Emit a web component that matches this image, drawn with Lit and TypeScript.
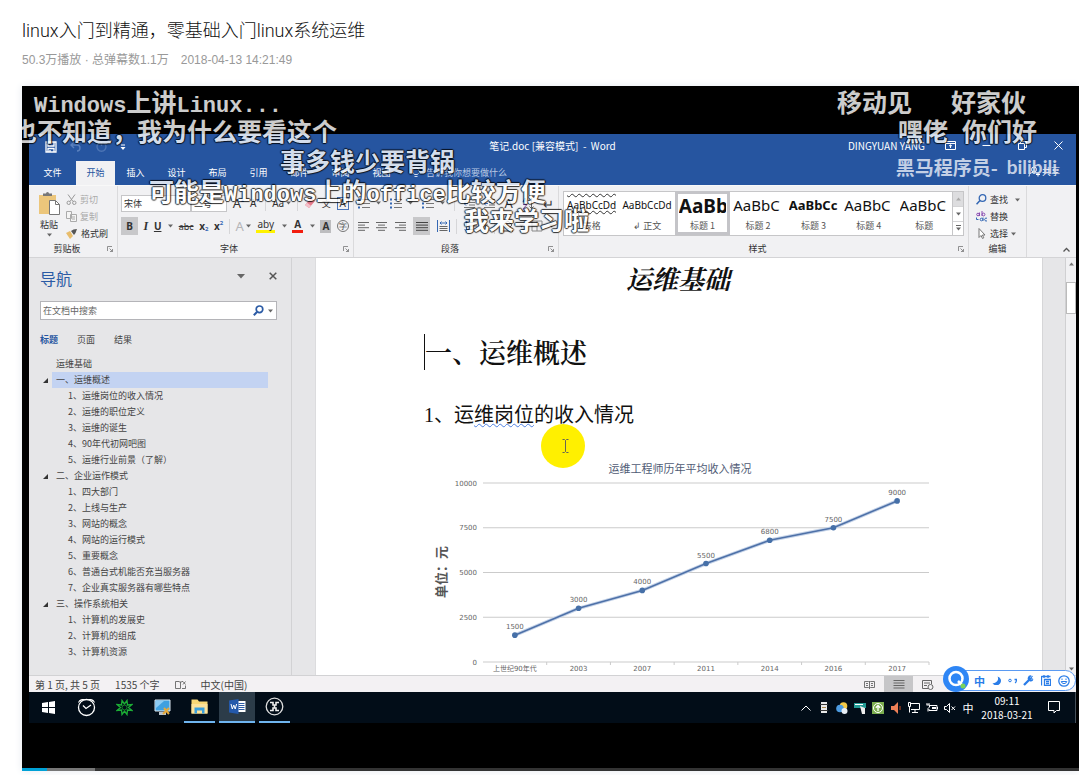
import { LitElement, html, svg, css, nothing } from "lit";
import { customElement } from "lit/decorators.js";
import { classMap } from "lit/directives/class-map.js";

/* ---------- shared icon helper ---------- */
const icon = (w: number, h: number, body: unknown) =>
  html`<svg class="ic" width=${w} height=${h} viewBox="0 0 ${w} ${h}" fill="none" aria-hidden="true">${body}</svg>`;

const caret = icon(5, 4, svg`<path d="M0 0.5h5L2.5 3.5z" fill="#666"/>`);
const launcher = icon(6, 6, svg`<path d="M0.5 5V0.5H5M2.5 2.5l3 3M5.5 3v2.5H3" stroke="#777" stroke-width="0.8"/>`);
const lines = (ws: [number, number][], color = "#666") =>
  svg`${ws.map(([x, w], i) => svg`<path d="M${x} ${1.5 + i * 2.6}h${w}" stroke=${color} stroke-width="1"/>`)}`;

const reset = css`
  * { box-sizing: border-box; margin: 0; padding: 0; }
  button, input, select { font: inherit; color: inherit; background: none; border: 0; border-radius: 0; outline: 0; }
  button { display: inline-flex; align-items: center; justify-content: center; gap: 2px; white-space: nowrap; }
  .ic { display: block; flex: none; }
`;

/* ---------- title bar and tabs ---------- */
@customElement("word-titlebar")
class WordTitlebar extends LitElement {
  static styles = [reset, css`
    :host { display: block; background: #2655a0; color: #fff; }
    .top { display: grid; grid-template-columns: 1fr auto 1fr; align-items: center; height: 27px; padding-bottom: 5px; font-size: 10px; }
    .quick { display: flex; gap: 13px; padding-left: 16px; align-items: center; padding-top: 4px; }
    .right { display: flex; justify-content: flex-end; align-items: center; }
    .right .user { margin-right: 7px; }
    .right .win { width: 36px; height: 20px; }
    .tabs { display: flex; height: 24px; align-items: stretch; font-size: 9px; }
    .tabs button { width: 41px; padding-bottom: 2px; }
    .tabs .file { width: 47px; }
    .tabs .on { width: 39px; background: #f1f1f3; color: #2655a0; }
    .tell { display: flex; align-items: center; gap: 6px; padding: 0 0 2px 10px; color: #b9c9e4; }
    .tabs .share { width: auto; margin-left: auto; margin-right: 16px; padding-bottom: 4px; }
  `];
  render() {
    const tabs = ["文件", "开始", "插入", "设计", "布局", "引用", "邮件", "审阅", "视图"];
    return html`
      <div class="top">
        <div class="quick">
          <button aria-label="保存">${icon(12, 12, svg`<path d="M1 1h10v10H1zM3 1v4h6V1M3 11V7.5h6V11M5 9v2" stroke="#fff" stroke-width="1.3"/>`)}</button>
          <button aria-label="撤消">${icon(12, 12, svg`<path d="M4 1L1 4l3 3M1 4h6a3 3 0 0 1 0 6" stroke="#5a80bd" stroke-width="1.4"/>`)}</button>
          <button aria-label="重复">${icon(12, 12, svg`<path d="M9 2a4.5 4.5 0 1 1-5 0M6.500 1v4" stroke="#4c74b4" stroke-width="1.4"/>`)}</button>
          <button aria-label="自定义">${icon(6, 7, svg`<path d="M1 1h4" stroke="#fff"/><path d="M0.500 3h5L3 6z" fill="#fff"/>`)}</button>
        </div>
        <div>笔记.doc [兼容模式] &nbsp;-&nbsp; Word</div>
        <div class="right">
          <span class="user">DINGYUAN YANG</span>
          <button class="win" aria-label="功能区">${icon(11, 9, svg`<path d="M0.500 0.500h10v8h-10zM0.500 2.500h10M5.500 7V4M4 5.200L5.500 3.800 7 5.200" stroke="#fff"/>`)}</button>
          <button class="win" aria-label="最小化">${icon(9, 9, svg`<path d="M0.500 4.500h8" stroke="#fff"/>`)}</button>
          <button class="win" aria-label="还原">${icon(9, 9, svg`<path d="M0.500 2.500h6v6h-6zM2.500 2V0.500h6v6H7" stroke="#fff"/>`)}</button>
          <button class="win" aria-label="关闭">${icon(9, 9, svg`<path d="M0.500 0.500l8 8M8.500 0.500l-8 8" stroke="#fff"/>`)}</button>
        </div>
      </div>
      <div class="tabs">
        ${tabs.map((t, i) => html`<button class=${classMap({ file: i === 0, on: i === 1 })}>${t}</button>`)}
        <span class="tell">${icon(8, 11, svg`<path d="M2.500 7.500C1 6 0.800 4.800 0.800 4a3.200 3.200 0 0 1 6.400 0c0 .8-.2 2-1.700 3.500zM2.500 9.500h3" stroke="#d5def0"/>`)}告诉我你想要做什么</span>
        <button class="share">${icon(12, 11, svg`<circle cx="6" cy="3.500" r="2.500" stroke="#fff"/><path d="M1 10.500c0-3 2-4 4-4M8 8.500h4M10 6.500v4" stroke="#fff"/>`)}共享</button>
      </div>`;
  }
}

/* ---------- ribbon ---------- */
@customElement("word-ribbon")
class WordRibbon extends LitElement {
  static styles = [reset, css`
    :host { display: flex; height: 73px; background: #f1f1f3; color: #333; font-size: 9px; border-top: 1px solid #f8f8f8; border-bottom: 1px solid #d4d4d6; box-sizing: border-box; }
    .group { display: flex; flex-direction: column; justify-content: space-between; padding: 5px 4px 1px; border-right: 1px solid #dadadc; }
    .foot { display: flex; align-items: center; line-height: 14px; }
    .foot .name { flex: 1; text-align: center; padding-right: 6px; }
    .edit .foot .name { padding-right: 0; }
    .clip { width: 89px; }
    .font { width: 236px; padding-left: 3px; }
    .para { width: 205px; }
    .styles { flex: 1; max-width: 410px; }
    .edit { width: 58px; border-right: 1px solid #dadadc; }
    .row { display: flex; align-items: center; justify-content: space-between; height: 18px; }
    .rows { display: flex; flex-direction: column; gap: 5px; padding-top: 3px; }
    .rows button { height: 18px; }
    .clipbody { display: flex; gap: 6px; padding-left: 5px; }
    .paste { flex-direction: column; align-items: center; gap: 2px; height: 45px; }
    .stack { display: flex; flex-direction: column; align-items: flex-start; }
    .stack button { height: 17px; gap: 3px; justify-content: flex-start; }
    .off { color: #aaa; }
    .pick { display: flex; }
    .pick select { appearance: none; height: 17px; border: 1px solid #c6c6c8; background: #fff; padding: 0 2px; font-size: 9px; }
    .face { width: 70px; }
    .size { width: 36px; }
    .row .on { background: #c8c8ca; width: 17px; }
    .latin { font-family: "Noto Sans", sans-serif; font-size: 10px; }
    .bold { font-weight: 700; }
    .tight { gap: 0; }
    .ital { font-style: italic; font-family: "Liberation Serif", serif; font-size: 12px; font-weight: 700; }
    .under { text-decoration: underline; font-weight: 700; }
    .strike { text-decoration: line-through; font-size: 9px; }
    .big { font-size: 13px; }
    .red { border-bottom: 3px solid #f21d0e; line-height: 11px; padding: 0 2px; }
    .yel { border-bottom: 3px solid #fff200; line-height: 11px; padding: 0 1px; }
    .ghost { color: #b5b5b8; }
    .fill { background: #bdbdbf; padding: 0 2px; line-height: 13px; font-weight: 700; }
    .ring { border: 1px solid #777; border-radius: 50%; width: 12px; height: 12px; line-height: 10px; font-size: 8px; text-align: center; }
    .boxed { border: 1px solid #4a74b8; line-height: 11px; padding: 0 2px; }
    .sep { width: 1px; height: 15px; background: #d6d6d8; }
    sub, sup { font-size: 6px; line-height: 6px; color: #3568b4; }
    sub { align-self: flex-end; padding-bottom: 3px; }
    sup { align-self: flex-start; padding-top: 3px; }
    .gallery { display: flex; height: 45px; background: #fff; border: 1px solid #c6c6c8; }
    .cells { display: grid; grid-template-columns: repeat(7, 1fr); flex: 1; }
    .cell { display: flex; flex-direction: column; justify-content: flex-start; gap: 1px; min-width: 0; overflow: hidden; padding: 0 3px; color: #555; }
    .cell.sel { border: 3px solid #c4c4c8; padding: 0 1px; margin-top: -1px; }
    .sample { width: 100%; height: 27px; line-height: 27px; overflow: hidden; color: #111; font-family: "Noto Sans", "Open Sans", sans-serif; text-align: left; }
    .sel .sample { height: 25px; line-height: 25px; }
    .s10 { font-size: 10px; } .s13 { font-size: 13px; } .s15 { font-size: 15px; } .s19 { font-size: 19px; }
    .wavy { text-decoration: underline overline wavy #333 1px; }
    .cell .cap { line-height: 12px; }
    .scroll { width: 11px; display: grid; grid-template-rows: 1fr 1fr 1fr; border-left: 1px solid #c6c6c8; }
    .scroll button + button { border-top: 1px solid #d4d4d6; }
    .scroll .dim { background: #dddddf; }
    .editbody { padding-left: 3px; }
    .collapse { margin-left: auto; align-self: flex-end; padding: 0 6px 5px 0; }
  `];
  private foot(label: string, open = true) {
    return html`<div class="foot"><span class="name">${label}</span>${open ? launcher : nothing}</div>`;
  }
  render() {
    const cells: [string, string, string][] = [
      ["AaBbCcDd", "s10 wavy", "表格"], ["AaBbCcDd", "s10", "↲ 正文"], ["AaBb", "s19 bold", "标题 1"],
      ["AaBbC", "s15", "标题 2"], ["AaBbCc", "s13 bold", "标题 3"], ["AaBbC", "s15", "标题 4"], ["AaBbC", "s15", "标题"],
    ];
    return html`
      <section class="group clip">
        <div class="clipbody">
          <button class="paste">${icon(22, 25, svg`<path d="M1 4h17v19H1z" fill="#ecc67b"/><path d="M5 5V2.500h3a1.500 1.500 0 0 1 3 0h3V5z" fill="#777"/><path d="M11.500 9.500h6l4 4v10h-10z" fill="#fff" stroke="#777"/><path d="M17.500 9.500v4h4" stroke="#777"/>`)}粘贴 ${caret}</button>
          <div class="stack">
            <button class="off">${icon(11, 11, svg`<path d="M2 0.500l5 7M9 0.500l-5 7" stroke="#999"/><circle cx="2.700" cy="8.800" r="1.700" stroke="#999"/><circle cx="8.300" cy="8.800" r="1.700" stroke="#999"/>`)}剪切</button>
            <button class="off">${icon(11, 11, svg`<path d="M0.500 0.500h5v7h-5zM4.500 3.500h6v7h-6zM6 6h3M6 8h3" stroke="#aaa" fill="#f4f4f4"/>`)}复制</button>
            <button>${icon(12, 11, svg`<path d="M0 5l4-2 3 5-3 3z" fill="#e8bd6c"/><path d="M5 3l3 4 1.500-2L11 1 7.500 1.500z" fill="#555"/>`)}格式刷</button>
          </div>
        </div>
        ${this.foot("剪贴板")}
      </section>
      <section class="group font">
        <div class="rows">
          <div class="row">
            <span class="pick">
              <select class="face" aria-label="字体"><option>宋体</option></select>
              <select class="size" aria-label="字号"><option>二号</option></select>
            </span>
            <button class="latin big tight">A<sup>▴</sup></button><button class="latin tight">A<sup>▾</sup></button><span class="sep"></span>
            <button class="latin">Aa ${caret}</button><span class="sep"></span>
            <button aria-label="清除格式">${icon(12, 12, svg`<path d="M1 8l6-7 4 3-6 7z" fill="#e77b8c"/><path d="M1 8l2-2.300 4 3L5 11z" fill="#f4c1ca"/>`)}</button>
            <button>文</button><button class="latin"><span class="boxed">A</span></button>
          </div>
          <div class="row latin">
            <button class="on bold">B</button><button class="ital">I</button><button><span class="under">U</span>&nbsp;${caret}</button>
            <button class="strike">abc</button><button class="bold tight">x<sub>2</sub></button><button class="bold tight">x<sup>2</sup></button><span class="sep"></span>
            <button class="ghost big">A ${caret}</button><button><span class="yel">aby</span>&nbsp;${caret}</button>
            <button><span class="red bold">A</span>&nbsp;${caret}</button><button><span class="fill">A</span></button><button><span class="ring">字</span></button>
          </div>
        </div>
        ${this.foot("字体")}
      </section>
      <section class="group para">
        <div class="rows">
          <div class="row">
            ${[0, 1, 2].map(() => html`<button aria-label="列表">${icon(12, 11, svg`<path d="M0 1.500h2M0 5.500h2M0 9.500h2" stroke="#3568b4" stroke-width="2"/><path d="M4 1.500h8M4 5.500h8M4 9.500h8" stroke="#777"/>`)}&nbsp;${caret}</button>`)}
            <span class="sep"></span>
            ${[0, 1].map(() => html`<button aria-label="缩进">${icon(11, 11, svg`<path d="M0 1.500h11M5 4.500h6M5 7h6M0 9.500h11" stroke="#777"/><path d="M4 5.500H0M2 3.500L0 5.500l2 2" stroke="#3568b4"/>`)}</button>`)}
            <button class="latin big">A</button>
            <button aria-label="排序">${icon(12, 13, svg`<path d="M1 5L3 1l2 4M1.500 4h3" stroke="#3568b4"/><path d="M1 7.500h4L1 12h4" stroke="#8a4bb0"/><path d="M9.500 1v11M7.500 9.500l2 2 2-2" stroke="#666"/>`)}</button>
            <button class="big">↵</button>
          </div>
          <div class="row">
            <button aria-label="左对齐">${icon(12, 11, lines([[0, 11], [0, 7], [0, 11], [0, 7]]))}</button>
            <button aria-label="居中">${icon(12, 11, lines([[0, 11], [2, 7], [0, 11], [2, 7]]))}</button>
            <button aria-label="右对齐">${icon(12, 11, lines([[0, 11], [4, 7], [0, 11], [4, 7]]))}</button>
            <button class="on" aria-label="两端对齐">${icon(12, 11, lines([[0, 12], [0, 12], [0, 12], [0, 12]], "#444"))}</button>
            <button aria-label="分散对齐">${icon(13, 12, svg`<path d="M0.500 0v12M12.500 0v12M3 3h7M4.500 1.500L3 3l1.500 1.500M8.500 1.500L10 3 8.500 4.500" stroke="#3568b4"/><path d="M2.500 6.500h8M2.500 8.500h8M2.500 10.500h8" stroke="#666"/>`)}</button>
            <span class="sep"></span>
            <button aria-label="行距">${icon(13, 12, svg`<path d="M2.500 1v10M0.500 3l2-2 2 2M0.500 9l2 2 2-2" stroke="#3568b4"/><path d="M6 2.500h7M6 6h7M6 9.500h7" stroke="#666"/>`)}&nbsp;${caret}</button>
            <span class="sep"></span>
            <button aria-label="底纹">${icon(12, 12, svg`<path d="M3 4l4-3 4 4-4 4z" stroke="#666"/><path d="M1 11h11" stroke="#999" stroke-width="2"/>`)}&nbsp;${caret}</button>
            <button aria-label="边框">${icon(12, 12, svg`<path d="M1 1h10v10H1zM6 1v10M1 6h10" stroke="#888"/>`)}&nbsp;${caret}</button>
          </div>
        </div>
        ${this.foot("段落")}
      </section>
      <section class="group styles">
        <div class="gallery">
          <div class="cells">
            ${cells.map(([s, c, cap], i) => html`<button class=${classMap({ cell: true, sel: i === 2 })}><span class="sample ${c}">${s}</span><span class="cap">${cap}</span></button>`)}
          </div>
          <div class="scroll">
            <button class="dim" aria-label="上">${icon(5, 4, svg`<path d="M0 3.500h5L2.500 0.500z" fill="#aaa"/>`)}</button>
            <button aria-label="下">${caret}</button>
            <button aria-label="更多">${icon(5, 6, svg`<path d="M0 0.500h5" stroke="#666"/><path d="M0 2.500h5L2.500 5.500z" fill="#666"/>`)}</button>
          </div>
        </div>
        ${this.foot("样式")}
      </section>
      <section class="group edit">
        <div class="stack editbody">
          <button>${icon(11, 11, svg`<circle cx="6.500" cy="4" r="3.300" stroke="#3568b4" stroke-width="1.300"/><path d="M4 6.500L0.500 10.300" stroke="#3568b4" stroke-width="1.600"/>`)}查找&nbsp;&nbsp;${caret}</button>
          <button>${icon(11, 11, svg`<circle cx="2" cy="3.500" r="1.300" stroke="#8a4bb0"/><path d="M3.500 1.500V5M6 0v5" stroke="#8a4bb0"/><circle cx="7.500" cy="3.500" r="1.400" stroke="#8a4bb0"/><circle cx="5.500" cy="8.500" r="1.300" stroke="#3568b4"/><path d="M7 6.500V10M11 7.300a1.500 1.500 0 1 0 0 2.500M0.500 6.500V8.500h2" stroke="#3568b4"/>`)}替换</button>
          <button>${icon(11, 11, svg`<path d="M3 0.500v9l2-2 1.500 3 1.300-.7-1.400-2.800H9z" stroke="#777" fill="#fff"/>`)}选择 ${caret}</button>
        </div>
        ${this.foot("编辑", false)}
      </section>
      <button class="collapse" aria-label="折叠">${icon(7, 5, svg`<path d="M0.500 4.500l3-3 3 3" stroke="#555" stroke-width="1.300"/>`)}</button>`;
  }
}

/* ---------- navigation pane ---------- */
@customElement("word-nav")
class WordNav extends LitElement {
  static styles = [reset, css`
    :host { display: block; box-sizing: border-box; width: 263px; padding: 11px 14px 6px 11px; background: #e6e6e8; border-right: 1px solid #d2d2d4; color: #444; font-size: 9px; }
    .head { display: flex; align-items: center; height: 18px; }
    h2 { font-size: 16px; line-height: 18px; font-weight: 400; color: #2b5ba5; flex: 1; }
    .head button { width: 32px; padding-bottom: 4px; }
    .head button + button { margin-right: -12px; }
    .search { display: flex; align-items: center; height: 19px; margin-top: 14px; background: #fff; border: 1px solid #b4b4b8; padding-right: 3px; }
    .search input { flex: 1; min-width: 0; padding-left: 2px; }
    .search input::placeholder { color: #666; opacity: 1; }
    .search button { gap: 4px; }
    .tabs { display: flex; gap: 19px; height: 18px; margin-top: 10px; }
    .tabs .on { color: #2655a0; font-weight: 700; }
    ul { list-style: none; margin-top: 8px; }
    li { display: flex; line-height: 16px; margin-right: 9px; }
    .tw { width: 12px; flex: none; display: flex; align-items: center; padding-left: 3px; }
    a { flex: 1; color: inherit; text-decoration: none; padding-left: 4px; }
    .sub a { padding-left: 16px; }
    .on a { background: #c3d3f2; }
  `];
  render() {
    const tree: [number, string][] = [
      [0, "运维基础"], [1, "一、运维概述"], [2, "1、运维岗位的收入情况"], [2, "2、运维的职位定义"], [2, "3、运维的诞生"],
      [2, "4、90年代初网吧图"], [2, "5、运维行业前景（了解）"], [1, "二、企业运作模式"], [2, "1、四大部门"], [2, "2、上线与生产"],
      [2, "3、网站的概念"], [2, "4、网站的运行模式"], [2, "5、重要概念"], [2, "6、普通台式机能否充当服务器"],
      [2, "7、企业真实服务器有哪些特点"], [1, "三、操作系统相关"], [2, "1、计算机的发展史"], [2, "2、计算机的组成"], [2, "3、计算机资源"],
    ];
    return html`
      <div class="head">
        <h2>导航</h2>
        <button aria-label="选项">${icon(8, 5, svg`<path d="M0 0h8L4 4.500z" fill="#666"/>`)}</button>
        <button aria-label="关闭">${icon(8, 8, svg`<path d="M0.700 0.700l6.600 6.600M7.300 0.700L0.700 7.300" stroke="#555" stroke-width="1.500"/>`)}</button>
      </div>
      <div class="search">
        <input type="text" aria-label="在文档中搜索" placeholder="在文档中搜索">
        <button aria-label="搜索">${icon(11, 11, svg`<circle cx="6.500" cy="4.300" r="3.300" stroke="#2b5ba5" stroke-width="1.700"/><path d="M4 7L0.800 10.200" stroke="#2b5ba5" stroke-width="2"/>`)}${caret}</button>
      </div>
      <div class="tabs"><button class="on">标题</button><button>页面</button><button>结果</button></div>
      <ul>
        ${tree.map(([lvl, t], i) => html`<li class=${classMap({ sub: lvl === 2, on: i === 1 })}>
          <span class="tw">${lvl === 1 ? icon(5, 5, svg`<path d="M5 0v5H0z" fill="#333"/>`) : nothing}</span><a href="#s${i}">${t}</a></li>`)}
      </ul>`;
  }
}

/* ---------- income chart ---------- */
@customElement("income-chart")
class IncomeChart extends LitElement {
  static styles = css`
    :host { display: block; }
    svg { display: block; width: 100%; max-width: 507px; }
    text { font-family: "DejaVu Sans", "Noto Sans CJK SC", sans-serif; font-size: 7px; fill: #666; }
    .mid { text-anchor: middle; }
    .end { text-anchor: end; }
    .title { font-family: "Noto Sans CJK SC", sans-serif; font-size: 11px; fill: #4f5b75; text-anchor: middle; }
    .unit { font-family: "Noto Sans CJK SC", sans-serif; font-size: 13px; font-weight: 700; fill: #555; text-anchor: middle; }
  `;
  render() {
    const data: [string, number][] = [["上世纪90年代", 1500], ["2003", 3000], ["2007", 4000], ["2011", 5500], ["2014", 6800], ["2016", 7500], ["2017", 9000]];
    const left = 59, right = 505, base = 208, top = 29;
    const step = (right - left) / data.length;
    const x = (i: number) => left + step * (i + 0.5);
    const y = (v: number) => base - ((base - top) * v) / 10000;
    const pts = data.map(([, v], i) => `${x(i)},${y(v)}`).join(" ");
    return html`<svg viewBox="0 0 507 221" role="img" aria-label="运维工程师历年平均收入情况">
      <text class="title" x="256" y="19">运维工程师历年平均收入情况</text>
      <text class="unit" transform="translate(22 118) rotate(-90)">单位：元</text>
      ${[0, 2500, 5000, 7500, 10000].map((v) => svg`<path d="M${left} ${y(v)}H${right}" stroke="#cbcbcb"/><text class="end" x="53" y=${y(v) + 2.5}>${v}</text>`)}
      ${data.map((_, i) => svg`<path d="M${left + step * (i + 1)} ${base}v3" stroke="#cbcbcb"/>`)}
      <polyline points=${pts} fill="none" stroke="#c5d3e8" stroke-width="3.500"/>
      <polyline points=${pts} fill="none" stroke="#4e71a8" stroke-width="1.600"/>
      ${data.map(([l, v], i) => svg`<circle cx=${x(i)} cy=${y(v)} r="2.800" fill="#4670a8"/>
        <text class="mid" x=${x(i)} y=${y(v) - 6}>${v}</text><text class="mid" x=${x(i)} y="217">${l}</text>`)}
    </svg>`;
  }
}

/* ---------- document area ---------- */
@customElement("word-page")
class WordPage extends LitElement {
  static styles = [reset, css`
    :host { display: flex; flex: 1; min-width: 0; background: #e6e6e8; }
    .page { position: relative; flex: 1; min-width: 0; margin-left: 23px; padding: 0 110px 0 108px; background: #fff; color: #111; overflow: hidden; border-left: 1px solid #dcdcde; }
    h1 { text-align: center; font-size: 26px; line-height: 40px; font-style: italic; font-weight: 700; font-family: "Noto Serif CJK SC", "Noto Sans CJK SC", serif; }
    h2 { margin-top: 36px; border-left: 1px solid #111; font-size: 27px; line-height: 36px; font-weight: 600; font-family: "Noto Serif CJK SC", "Noto Sans CJK SC", serif; }
    h3 { margin-top: 31px; font-size: 20px; line-height: 28px; font-weight: 400; font-family: "Liberation Serif", "Noto Sans CJK SC", serif; }
    .spell { text-decoration: underline wavy #4d7fe0 1px; text-underline-offset: 1px; }
    income-chart { margin-top: 25px; margin-right: -1px; }
    .pointer { position: absolute; left: 225px; top: 166px; width: 44px; height: 44px; border-radius: 50%; background: #fff000; display: flex; align-items: center; justify-content: center; padding-left: 4px; }
    .gutter { width: 23px; border-left: 1px solid #d6d6d8; }
    .bar { width: 11px; background: #f1f1f3; border-left: 1px solid #d0d0d2; display: flex; flex-direction: column; align-items: center; padding: 4px 0; }
    .bar .thumb { width: 100%; height: 32px; background: #fff; border: 1px solid #bbb; margin-top: 16px; margin-bottom: auto; }
  `];
  render() {
    return html`
      <div class="page">
        <h1>运维基础</h1>
        <h2>一、运维概述</h2>
        <h3>1、运<span class="spell">维岗位</span>的收入情况</h3>
        <income-chart></income-chart>
        <div class="pointer">${icon(7, 14, svg`<path d="M0.500 0.500h2l1 1 1-1h2M3.500 1.500v11M0.500 13.500h2l1-1 1 1h2" stroke="#665"/>`)}</div>
      </div>
      <div class="gutter"></div>
      <div class="bar">
        ${icon(5, 4, svg`<path d="M0 3.500h5L2.500 0.500z" fill="#777"/>`)}
        <div class="thumb"></div>${caret}
      </div>`;
  }
}

/* ---------- status bar, taskbar, input method bar ---------- */
@customElement("desk-footer")
class DeskFooter extends LitElement {
  static styles = [reset, css`
    :host { display: block; position: relative; }
    .status { display: flex; align-items: center; height: 17px; gap: 15px; padding-left: 6px; background: #f3f1f3; border-top: 1px solid #d2d2d4; color: #444; font-size: 10px; white-space: nowrap; }
    .views { display: flex; margin-left: auto; padding-right: 134px; height: 16px; }
    .views button { width: 29px; }
    .views .on { background: #c6c6c8; }
    .task { display: flex; align-items: stretch; height: 31px; background: #020d18; color: #fff; }
    .apps { display: flex; }
    .apps button { width: 38px; }
    .apps .run { width: 31px; margin: 0 3px; border-bottom: 2px solid #6fb4ee; }
    .apps .act { width: 36px; margin: 0 1px; background: #2c3c49; border-bottom: 2px solid #6fb4ee; }
    .tray { display: flex; align-items: center; margin-left: auto; }
    .tray button { width: 18px; }
    .clock { width: 60px; font-size: 10px; line-height: 14px; text-align: center; }
    .tray .note { width: 33px; }
    .edge { width: 6px; height: 31px; border-right: 1px solid #46505a; }
    .zh { font-size: 11px; }
    .ime { position: absolute; right: 0; top: -5px; width: 121px; height: 21px; border: 1px solid #5a9af2; border-radius: 0 11px 11px 0; background: #fff; color: #2a7de8; display: flex; align-items: center; justify-content: space-between; padding: 0 5px 0 18px; font-size: 11px; font-weight: 700; }
    .ball { position: absolute; left: -13px; top: -5px; width: 26px; height: 26px; }
  `];
  render() {
    return html`
      <div class="status">
        <span>第 1 页, 共 5 页</span><span>1535 个字</span>
        ${icon(11, 9, svg`<path d="M5.500 1.500v7H0.500v-7h3.500l1.500 1 1.500-1h1M7 8.500h3.500v-3M8 1.500l2.500 3M10.500 1.500L8 4.500" stroke="#666" stroke-width="0.900"/>`)}
        <span>中文(中国)</span>
        <div class="views">
          <button aria-label="阅读视图">${icon(11, 9, svg`<path d="M5.500 1v8M0.500 1.500h4l1 .5 1-.5h4v6h-4l-1 .5-1-.5h-4zM2 3.500h2M2 5.500h2M7 3.500h2M7 5.500h2" stroke="#666" stroke-width="0.900"/>`)}</button>
          <button class="on" aria-label="页面视图">${icon(12, 11, svg`<path d="M0.500 1.500h11M0.500 4h11M0.500 6.500h11M0.500 9h11" stroke="#666"/>`)}</button>
          <button aria-label="Web 版式">${icon(12, 11, svg`<path d="M6 9.500H0.500v-8h9V5M2 4h6M2 6.500h3" stroke="#666"/><circle cx="8.500" cy="8" r="2.500" stroke="#666"/>`)}</button>
        </div>
      </div>
      <div class="task">
        <div class="apps">
          <button aria-label="开始">${icon(13, 13, svg`<path d="M0 2l6-.9V6H0zM7 1l6-1v6H7zM0 7h6v4.900L0 11zM7 7h6v6l-6-1z" fill="#fff"/>`)}</button>
          <button aria-label="闹钟">${icon(19, 19, svg`<circle cx="9.500" cy="9.500" r="8" stroke="#fff" stroke-width="1.300"/><path d="M1 5a5 5 0 0 1 4-4h9a5 5 0 0 1 4 4c-3-3-6-3.300-8.500-3.300S4 2 1 5z" fill="#fff"/><path d="M6 7.500l3 3 5-3.500" stroke="#fff" stroke-width="1.300"/>`)}</button>
          <button aria-label="工具">${icon(17, 17, svg`<path d="M8.500 5L6 1.500 5.500 6 1 5.500 4.500 8.500 1 11.500l4.500-.5L6 15.500 8.500 12l2.500 3.500.5-4.500 4.500.5-3.500-3L16 5.500l-4.500.5L11 1.500z" stroke="#1cae35" stroke-width="1.300"/><circle cx="8.500" cy="8.500" r="2.500" stroke="#168a2a"/>`)}</button>
          <button aria-label="电脑">${icon(17, 18, svg`<path d="M1 1h15v11H1z" fill="#3fa0e0" stroke="#dce8f0"/><path d="M2 2h8L2 9z" fill="#8ccbf3"/><path d="M5 13h7v3H5z" fill="#b8c2ca"/><path d="M9 15l6-6M10 9l5 6" stroke="#e5a93a" stroke-width="2"/>`)}</button>
          <button class="run" aria-label="文件夹">${icon(17, 15, svg`<path d="M0.500 0.500h6l1.500 2h8.500v12H0.500z" fill="#f8d775"/><path d="M0.500 5h16v9.500H0.500z" fill="#fce29b"/><path d="M3.500 14.500V8.500h10v6h-2.500v-3H6v3z" fill="#3a9fdc"/>`)}</button>
          <button class="act" aria-label="Word">${icon(17, 15, svg`<path d="M8 2h8.500v11H8z" fill="#fff"/><path d="M9.500 4.500h6M9.500 6.500h6M9.500 8.500h6M9.500 10.500h6" stroke="#2b5ba5"/><path d="M0 1.500L9.500 0v15L0 13.500z" fill="#2459ab"/><path d="M2 5l1.300 5L4.800 6l1.400 4L7.600 5" stroke="#fff"/>`)}</button>
          <button class="run" aria-label="录屏">${icon(19, 19, svg`<circle cx="9.500" cy="9.500" r="8.300" stroke="#ddd" stroke-width="1.300"/><path d="M5 5.500h3v2.500h3V5.500h3M5 13.500h3V11h3v2.500h3M9.500 8v3" stroke="#eee" stroke-width="1.600"/>`)}</button>
        </div>
        <div class="tray">
          <button aria-label="展开">${icon(10, 6, svg`<path d="M0.500 5.500l4.500-4.500 4.500 4.500" stroke="#fff"/>`)}</button>
          <button aria-label="存储">${icon(8, 11, svg`<path d="M1 0h6v11H1z" fill="#e9e9e9"/><path d="M0 2.500h8M0 8.500h8" stroke="#333"/><path d="M2 5.500h4" stroke="#a98a50"/>`)}</button>
          <button aria-label="聊天">${icon(12, 12, svg`<circle cx="7.500" cy="4" r="3.800" fill="#f5c945"/><circle cx="4" cy="6.500" r="3.800" fill="#4d9be0"/><circle cx="8.500" cy="9" r="3" fill="#e8eef5"/>`)}</button>
          <button aria-label="网络工具">${icon(12, 12, svg`<path d="M0 1h12v5H0z" fill="#239a94"/><path d="M6 4l5 2v6H8z" fill="#eee"/><path d="M1 2.500h8" stroke="#fff"/>`)}</button>
          <button aria-label="更新">${icon(12, 12, svg`<path d="M0 0h12v12H0z" fill="#7cae4f"/><circle cx="6" cy="6" r="4.500" stroke="#fff"/><path d="M6 9V3.500M3.800 5.700L6 3.500l2.200 2.200" stroke="#fff" stroke-width="1.300"/>`)}</button>
          <button aria-label="音量">${icon(11, 12, svg`<path d="M0 4h3l4-4v12L3 8H0z" fill="#ee8057"/><path d="M9 4v4" stroke="#883722" stroke-width="1.500"/>`)}</button>
          <button aria-label="网络">${icon(12, 11, svg`<path d="M3 1.500h8.500v6H3M0.500 0.500h2v4h-2zM1.500 5v5.500M4 10.500h6M7 7.500v3" stroke="#fff"/>`)}</button>
          <button aria-label="电池">${icon(12, 10, svg`<path d="M4 2.500h7v5H3v-1.500M11.500 4v2M1 0v2M3 0v2M0.500 2h3v2l-1.500 1.500v3" stroke="#fff"/><path d="M6 4h4v2H6z" fill="#fff"/>`)}</button>
          <button aria-label="静音">${icon(12, 10, svg`<path d="M0.500 3.500h2l3-3v9l-3-3h-2zM7.500 3.500l3.500 3.500M11 3.500L7.500 7" stroke="#fff"/>`)}</button>
          <button class="zh">中</button>
          <div class="clock">09:11<br>2018-03-21</div>
          <button class="note" aria-label="通知">${icon(12, 13, svg`<path d="M0.500 0.500h11v9H8.500l-2.500 2.500V9.500H0.500z" stroke="#fff"/>`)}</button>
          <span class="edge"></span>
        </div>
      </div>
      <div class="ime">
        <svg class="ball" viewBox="0 0 26 26" aria-hidden="true"><circle cx="13" cy="13" r="13" fill="#2e86f5"/><circle cx="13" cy="12.500" r="6.500" fill="none" stroke="#fff" stroke-width="2.500"/><path d="M15 15l4 4" stroke="#fff" stroke-width="2.500"/><circle cx="20" cy="20" r="2.500" fill="#7bd25a"/></svg>
        <span>中</span>
        ${icon(9, 9, svg`<path d="M5.500 0.500a4.500 4.500 0 0 1-5 6.500 4.500 4.500 0 1 0 5-6.500z" fill="#2a7de8"/>`)}
        ${icon(9, 9, svg`<circle cx="2" cy="4.500" r="1.300" stroke="#2a7de8"/><path d="M6.500 3.500h2c0 2-.5 3-1.500 3.500" stroke="#2a7de8" stroke-width="1.300"/>`)}
        ${icon(11, 11, svg`<path d="M1 10L6 5" stroke="#2a7de8" stroke-width="2.300"/><path d="M9.500 1L7.500 3.500 10 4.300" stroke="#2a7de8" stroke-width="1.200"/><path d="M8.500 0.500a3 3 0 1 0 2 4L8 4.500 7 3z" fill="#2a7de8"/>`)}
        ${icon(10, 11, svg`<path d="M0.500 1.500h9M0.500 1v9.500M3 0v3M7 0v3M3.500 4.500h6v6h-6zM5 6.500h3M5 8.500h3" stroke="#2a7de8" stroke-width="1.300"/>`)}
        ${icon(12, 12, svg`<circle cx="6" cy="6" r="5.200" stroke="#2a7de8" stroke-width="1.300"/><path d="M3.200 6.500a2.900 2.900 0 0 0 5.600 0z" stroke="#2a7de8"/><path d="M4 3.500v1.500M8 3.500v1.500" stroke="#2a7de8"/>`)}
      </div>`;
  }
}

/* ---------- page ---------- */
@customElement("app-root")
class AppRoot extends LitElement {
  static styles = css`
    :host { display: block; background: #fff; overflow: hidden; font-family: "Noto Sans CJK SC", "Noto Sans", sans-serif; }
    .wrap { padding: 19px 0 4px 22px; }
    h1 { margin: 0; font: 300 18px/24px Roboto, "Noto Sans CJK SC", sans-serif; color: #111; }
    .meta { display: flex; gap: 12px; margin-top: 8px; font: 12px/18px "Liberation Sans", "Noto Sans CJK SC", sans-serif; color: #999; }
    .player { position: relative; margin-top: 17px; background: #000; overflow: hidden; box-shadow: 0 0 8px #e5e9ef; }
    .screen { margin: 0 3px 0 7px; padding: 48px 0 45px; }
    .work { display: flex; height: 417px; }
    .progress { display: flex; height: 3px; background: #333; }
    .played { background: #00a1d6; width: 2.4%; }
    .loaded { background: #777; width: 4.5%; }
    .dm { position: absolute; white-space: nowrap; font-size: 25px; line-height: 30px; font-weight: 700; color: #fff; opacity: 0.8; text-shadow: 1px 0 1px #000, 0 1px 1px #000, 0 -1px 1px #000, -1px 0 1px #000; }
    .dm .en { font-family: "Liberation Mono", monospace; font-size: 22px; }
    .mark { position: absolute; right: 22px; top: 66px; display: flex; align-items: center; gap: 9px; color: #d5dded; opacity: 0.9; font-size: 19px; line-height: 30px; font-weight: 700; white-space: nowrap; }
    .logo { font-family: Lato, sans-serif; font-weight: 700; font-size: 19px; }
  `;
  private split(t: string) {
    return t.split(/([\x20-\x7e]+)/).map((p, i) => (i % 2 ? html`<span class="en">${p}</span>` : p));
  }
  render() {
    const comments: [string, number, number][] = [
      ["Windows上讲Linux...", 12, 0], ["移动见", 815, 0], ["好家伙", 929, 0],
      ["也不知道，我为什么要看这个", -10, 29], ["嘿佬", 876, 29], ["你们好", 940, 29],
      ["事多钱少要背锅", 258, 59], ["可能是Windows上的office比较方便", 127, 89], ["我来学习啦", 442, 118],
    ];
    return html`
      <div class="wrap">
        <h1>linux入门到精通，零基础入门linux系统运维</h1>
        <div class="meta"><span>50.3万播放 · 总弹幕数1.1万</span><time>2018-04-13 14:21:49</time></div>
        <div class="player">
          <div class="screen">
            <word-titlebar></word-titlebar>
            <word-ribbon></word-ribbon>
            <div class="work"><word-nav></word-nav><word-page></word-page></div>
            <desk-footer></desk-footer>
          </div>
          <div class="mark"><span>黑马程序员-</span><span class="logo">bilibili</span></div>
          ${comments.map(([t, x, y]) => html`<div class="dm" style="left:${x}px;top:${y}px">${this.split(t)}</div>`)}
          <div class="progress"><div class="played"></div><div class="loaded"></div></div>
        </div>
      </div>`;
  }
}
